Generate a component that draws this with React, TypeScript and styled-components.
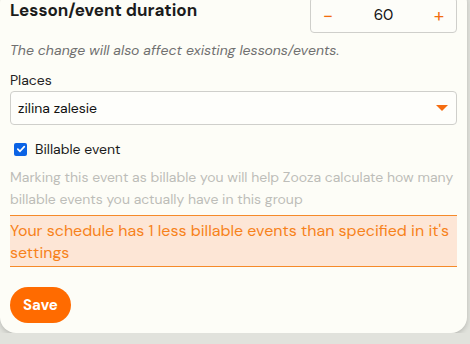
import React from 'react'
import styled, { createGlobalStyle } from 'styled-components'

const Global = createGlobalStyle`
  html, body {
    margin: 0;
    padding: 0;
    background: #e1e2dc;
    overflow: hidden;
  }
  body {
    font-family: 'DM Sans', Inter, 'Noto Sans', sans-serif;
  }
`

const Card = styled.div`
  width: 467px;
  margin-top: -13px;
  box-sizing: border-box;
  padding: 10px 10px 10px 10px;
  background: #fdfdf7;
  border-radius: 16px;
  box-shadow: 0 2px 5px rgba(0, 0, 0, 0.18);
`

const TopRow = styled.div`
  display: flex;
  justify-content: space-between;
  align-items: flex-start;
`

const Heading = styled.h2`
  margin: 0;
  padding-top: 1px;
  font-size: 17px;
  font-weight: 700;
  color: #1b1b1b;
  line-height: 24px;
`

const Stepper = styled.div`
  width: 147px;
  height: 36px;
  box-sizing: border-box;
  display: flex;
  align-items: center;
  justify-content: space-between;
  padding: 0 10px 0 10px;
  border: 1px solid #cfcfcb;
  border-radius: 4px;
  background: #fdfdf9;
`

const StepButton = styled.span`
  color: #f26d0f;
  font-size: 19px;
  line-height: 1;
  width: 14px;
  text-align: center;
`

const StepValue = styled.span`
  font-size: 15px;
  color: #111;
`

const Hint = styled.p`
  margin: 7px 0 0;
  font-size: 14px;
  font-style: italic;
  color: #707070;
  line-height: 20px;
`

const Label = styled.div`
  margin-top: 10px;
  font-size: 14px;
  color: #222;
  line-height: 20px;
`

const Select = styled.div`
  margin-top: 1px;
  height: 34px;
  box-sizing: border-box;
  display: flex;
  align-items: center;
  justify-content: space-between;
  padding: 0 8px 0 7px;
  border: 1px solid #cfcfcb;
  border-radius: 4px;
  background: #fefefb;
  font-size: 14px;
  color: #111;
`

const Caret = styled.span`
  width: 0;
  height: 0;
  border-left: 6px solid transparent;
  border-right: 6px solid transparent;
  border-top: 6px solid #f56c10;
`

const CheckRow = styled.label`
  margin-top: 14px;
  display: flex;
  align-items: center;
  gap: 8px;
  padding-left: 4px;
  font-size: 14px;
  color: #1b1b1b;
  line-height: 20px;
`

const Box = styled.span`
  width: 13px;
  height: 13px;
  border-radius: 2px;
  background: #0b63e5;
  display: flex;
  align-items: center;
  justify-content: center;
`

const Muted = styled.p`
  margin: 7px 0 0;
  font-size: 14px;
  color: #bdbdb9;
  line-height: 22px;
`

const Warning = styled.div`
  margin-top: 5px;
  padding: 4px 0 2px;
  background: #fde6d6;
  border-top: 1px solid #f58a2a;
  border-bottom: 1px solid #f58a2a;
  font-size: 16px;
  color: #f7821b;
  line-height: 22px;
`

const SaveButton = styled.button`
  display: block;
  margin-top: 20px;
  height: 36px;
  padding: 0 13px;
  border: none;
  border-radius: 18px;
  background: #ff6b00;
  color: #fff;
  font-family: inherit;
  font-size: 15px;
  font-weight: 700;
`

export default function App() {
  return (
    <>
      <Global />
      <Card>
        <TopRow>
          <Heading>Lesson/event duration</Heading>
          <Stepper>
            <StepButton>−</StepButton>
            <StepValue>60</StepValue>
            <StepButton>+</StepButton>
          </Stepper>
        </TopRow>
        <Hint>The change will also affect existing lessons/events.</Hint>
        <Label>Places</Label>
        <Select>
          <span>zilina zalesie</span>
          <Caret />
        </Select>
        <CheckRow>
          <Box>
            <svg width="10" height="10" viewBox="0 0 10 10">
              <path d="M1.8 5.2 L4 7.3 L8.3 2.6" fill="none" stroke="#fff" strokeWidth="1.7" strokeLinecap="round" strokeLinejoin="round" />
            </svg>
          </Box>
          Billable event
        </CheckRow>
        <Muted>
          Marking this event as billable you will help Zooza calculate how many billable events you actually have in this group
        </Muted>
        <Warning>Your schedule has 1 less billable events than specified in it's settings</Warning>
        <SaveButton>Save</SaveButton>
      </Card>
    </>
  )
}
